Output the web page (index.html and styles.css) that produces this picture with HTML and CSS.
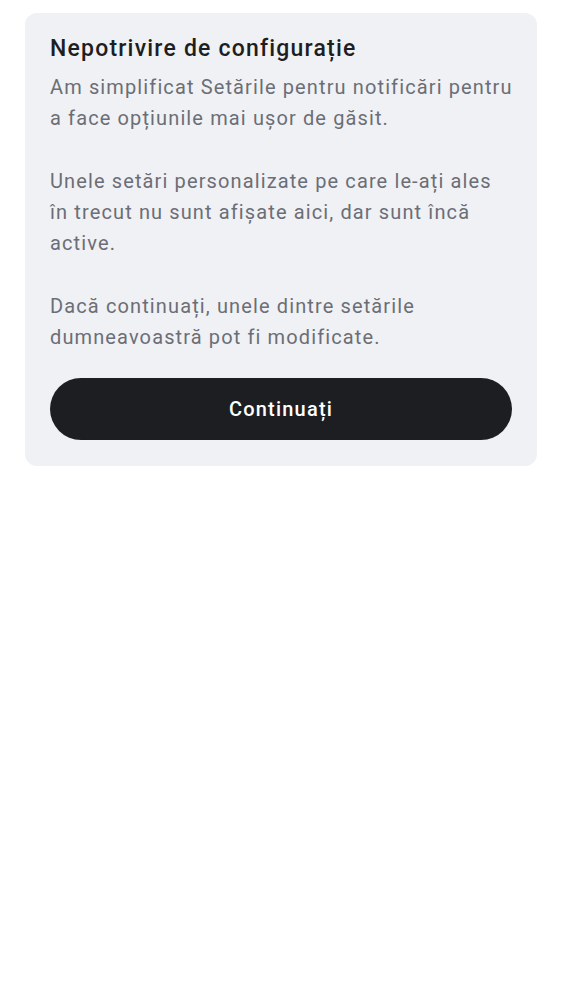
FILE: index.html
```html
<!DOCTYPE html>
<html lang="ro">
<head>
<meta charset="utf-8">
<link rel="stylesheet" href="styles.css">
</head>
<body>
<div class="card">
  <h1 class="title">Nepotrivire de configurație</h1>
  <div class="body">
    <p>Am simplificat Setările pentru notificări pentru a face opțiunile mai ușor de găsit.</p>
    <p>Unele setări personalizate pe care le-ați ales în trecut nu sunt afișate aici, dar sunt încă active.</p>
    <p>Dacă continuați, unele dintre setările dumneavoastră pot fi modificate.</p>
  </div>
  <button class="btn">Continuați</button>
</div>
</body>
</html>
```
FILE: styles.css
```css
html, body {
  margin: 0;
  padding: 0;
  background: #ffffff;
  font-family: Roboto, "Noto Sans", sans-serif;
}
.card {
  margin: 13px 25px 0;
  background: #f0f1f5;
  border-radius: 12px;
  padding: 21px 25px 26px;
  display: flex;
  flex-direction: column;
}
.title {
  margin: 0;
  font-size: 23px;
  font-weight: 500;
  line-height: 30px;
  letter-spacing: 1.2px;
  color: #1d1e22;
}
.body {
  margin-top: 8px;
  margin-right: -3px;
  color: #6b6e76;
  font-size: 20px;
  line-height: 31px;
  letter-spacing: 1.12px;
}
.body p {
  margin: 0 0 32px;
}
.body p:last-child {
  margin-bottom: 0;
}
.btn {
  margin-top: 25px;
  height: 62px;
  border: none;
  border-radius: 31px;
  background: #1d1e22;
  color: #ffffff;
  font-family: Roboto, "Noto Sans", sans-serif;
  font-size: 20px;
  font-weight: 500;
  letter-spacing: 1.2px;
}
```
